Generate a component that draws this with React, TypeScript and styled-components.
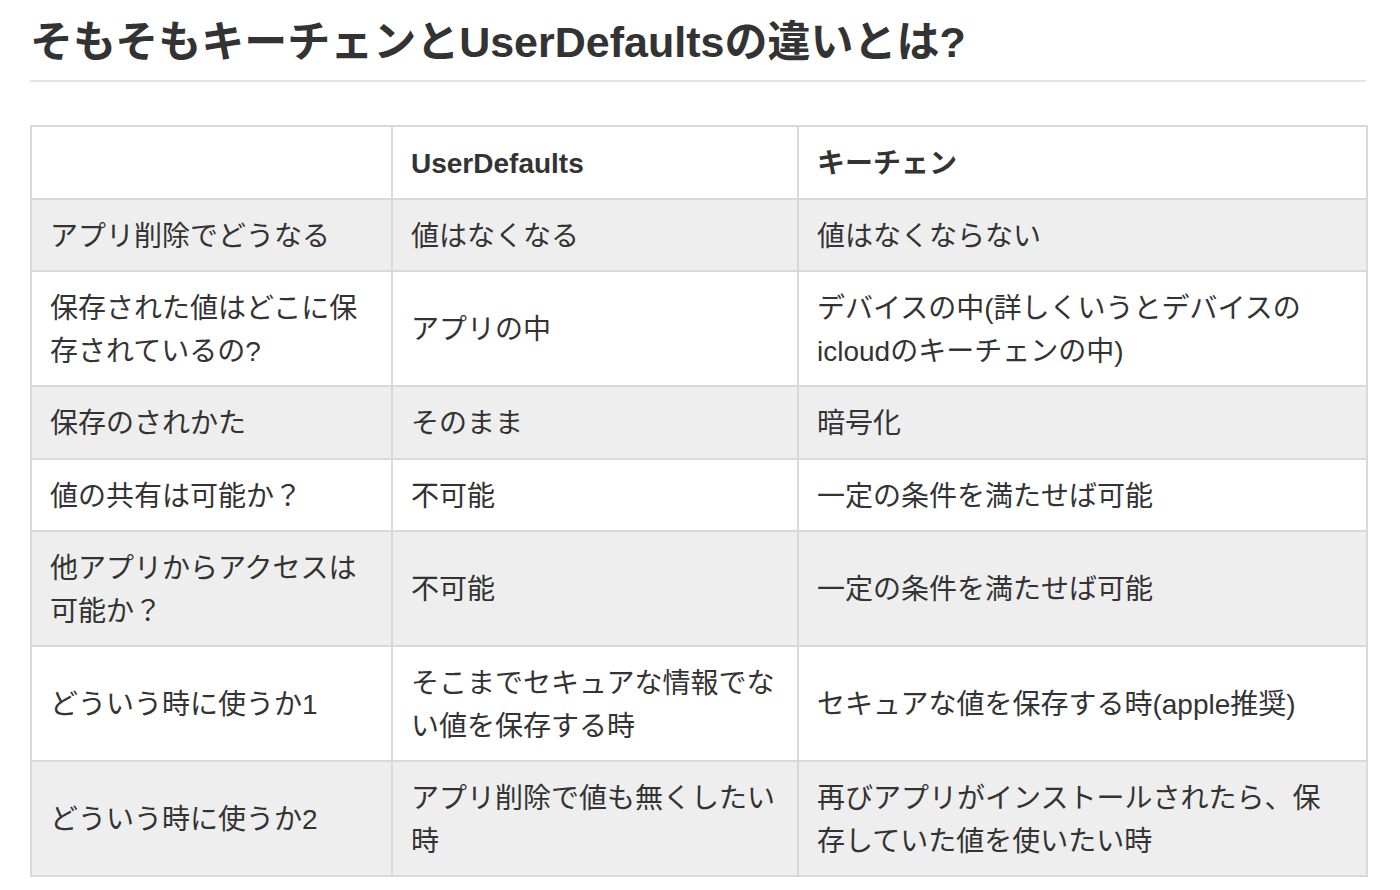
import React from "react";
import styled, { createGlobalStyle } from "styled-components";

const GlobalStyle = createGlobalStyle`
  html, body {
    margin: 0;
    padding: 0;
    background: #ffffff;
  }
  body {
    font-family: "Liberation Sans", "Noto Sans CJK JP", sans-serif;
    color: #333333;
  }
`;

const Page = styled.main`
  width: 1336px;
  padding: 0 34px 0 30px;
`;

const Title = styled.h2`
  margin: 0;
  padding: 12px 0 8px;
  font-size: 43px;
  line-height: 60px;
  font-weight: 700;
  color: #333333;
  border-bottom: 2px solid #e4e4e4;
`;

const Table = styled.table`
  margin-top: 43px;
  width: 1336px;
  table-layout: fixed;
  border-collapse: collapse;
  font-size: 28px;
  line-height: 42.5px;
  color: #333333;
`;

const Row = styled.tr<{ $shaded?: boolean }>`
  background: ${(p) => (p.$shaded ? "#eeeeee" : "#ffffff")};
`;

const HeadCell = styled.th`
  border: 2px solid #d9d9d9;
  padding: 16px 20px 12px 18px;
  text-align: left;
  vertical-align: middle;
  font-weight: 700;
`;

const Cell = styled.td`
  border: 2px solid #d9d9d9;
  padding: 16px 20px 12px 18px;
  text-align: left;
  vertical-align: middle;
  font-weight: 400;
`;

const rows: [string, string, string][] = [
  ["アプリ削除でどうなる", "値はなくなる", "値はなくならない"],
  [
    "保存された値はどこに保存されているの?",
    "アプリの中",
    "デバイスの中(詳しくいうとデバイスのicloudのキーチェンの中)",
  ],
  ["保存のされかた", "そのまま", "暗号化"],
  ["値の共有は可能か？", "不可能", "一定の条件を満たせば可能"],
  ["他アプリからアクセスは可能か？", "不可能", "一定の条件を満たせば可能"],
  [
    "どういう時に使うか1",
    "そこまでセキュアな情報でない値を保存する時",
    "セキュアな値を保存する時(apple推奨)",
  ],
  [
    "どういう時に使うか2",
    "アプリ削除で値も無くしたい時",
    "再びアプリがインストールされたら、保存していた値を使いたい時",
  ],
];

export default function App() {
  return (
    <>
      <GlobalStyle />
      <Page>
        <Title>そもそもキーチェンとUserDefaultsの違いとは?</Title>
        <Table>
          <colgroup>
            <col style={{ width: 361 }} />
            <col style={{ width: 406 }} />
            <col style={{ width: 569 }} />
          </colgroup>
          <thead>
            <Row>
              <HeadCell></HeadCell>
              <HeadCell>UserDefaults</HeadCell>
              <HeadCell>キーチェン</HeadCell>
            </Row>
          </thead>
          <tbody>
            {rows.map((r, i) => (
              <Row key={i} $shaded={i % 2 === 0}>
                <Cell>{r[0]}</Cell>
                <Cell>{r[1]}</Cell>
                <Cell>{r[2]}</Cell>
              </Row>
            ))}
          </tbody>
        </Table>
      </Page>
    </>
  );
}
